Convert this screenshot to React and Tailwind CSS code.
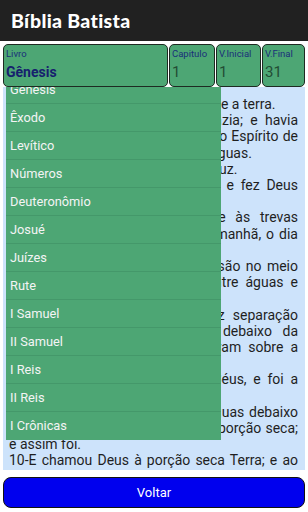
import React from "react";

const books = [
  "Gênesis",
  "Êxodo",
  "Levítico",
  "Números",
  "Deuteronômio",
  "Josué",
  "Juízes",
  "Rute",
  "I Samuel",
  "II Samuel",
  "I Reis",
  "II Reis",
  "I Crônicas",
];

const verses = [
  "1-No princípio criou Deus os céus e a terra.",
  "2-E a terra era sem forma e vazia; e havia trevas sobre a face do abismo; e o Espírito de Deus se movia sobre a face das águas.",
  "3-E disse Deus: Haja luz; e houve luz.",
  "4-E viu Deus que era boa a luz; e fez Deus separação entre a luz e as trevas.",
  "5-E Deus chamou à luz Dia; e às trevas chamou Noite. E foi a tarde e a manhã, o dia primeiro.",
  "6-E disse Deus: Haja uma expansão no meio das águas, e haja separação entre águas e águas.",
  "7-E fez Deus a expansão, e fez separação entre as águas que estavam debaixo da expansão e as águas que estavam sobre a expansão; e assim foi.",
  "8-E chamou Deus à expansão Céus, e foi a tarde e a manhã, o dia segundo.",
  "9-E disse Deus: Ajuntem-se as águas debaixo dos céus num lugar; e apareça a porção seca; e assim foi.",
  "10-E chamou Deus à porção seca Terra; e ao ajuntamento das águas chamou Mares; e viu Deus que era bom.",
];

function Field({ label, value, className, valueClass }) {
  return (
    <div
      className={`flex flex-col rounded-[5px] border border-[#1e2a22] bg-[#4da674] px-[2px] ${className}`}
    >
      <span className="text-[9.5px] leading-[12px] text-[#1a2f7a] mt-[3px] whitespace-nowrap">{label}</span>
      <span className={`mt-[4px] ${valueClass}`}>{value}</span>
    </div>
  );
}

export default function App() {
  return (
    <div
      className="w-[308px] h-[512px] bg-white overflow-hidden relative"
      style={{ fontFamily: "Roboto, 'Noto Sans', sans-serif" }}
    >
      <div className="h-[41px] bg-[#212121] flex items-center px-[11px]">
        <span
          className="text-white text-[19.5px] font-black tracking-[0.3px]"
          style={{ fontFamily: "Lato, 'Open Sans', sans-serif" }}
        >
          Bíblia Batista
        </span>
      </div>

      <div className="flex gap-[1px] px-[3px] pt-[3px] h-[46px]">
        <Field
          label="Livro"
          value="Gênesis"
          className="w-[165px] h-[43px]"
          valueClass="text-[14px] font-bold text-[#16206e] leading-[16px]"
        />
        <Field
          label="Capitulo"
          value="1"
          className="w-[46px] h-[43px]"
          valueClass="text-[15px] text-[#234d35] leading-[16px]"
        />
        <Field
          label="V.Inicial"
          value="1"
          className="w-[45px] h-[43px]"
          valueClass="text-[15px] text-[#234d35] leading-[16px]"
        />
        <Field
          label="V.Final"
          value="31"
          className="w-[43px] h-[43px]"
          valueClass="text-[15px] text-[#234d35] leading-[16px]"
        />
      </div>

      <div className="mx-[3px] h-[383px] bg-[#cde3fb] overflow-hidden pl-[6px] pr-[7px] pt-[9px] text-[14px] leading-[16.2px] text-[#1f1f1f]">
        {verses.map((v, i) => (
          <div key={i} className="text-justify">
            {v}
          </div>
        ))}
      </div>

      <div className="absolute left-[6px] top-[87px] w-[215px] h-[353px] overflow-hidden bg-[#4da674]">
        <div className="-mt-[11px]">
          {books.map((b, i) => (
            <div
              key={b}
              className={`h-[28px] flex items-center px-[4px] text-[12.8px] text-[#f4f4f4] ${
                i < books.length - 1 ? "border-b border-[#44986a]" : ""
              }`}
            >
              {b}
            </div>
          ))}
        </div>
      </div>

      <div className="px-[3px] pt-[7px]">
        <button className="w-full h-[31px] rounded-[8px] border border-[#111] bg-[#0000ee] text-white text-[13px] flex items-center justify-center">
          Voltar
        </button>
      </div>
    </div>
  );
}
